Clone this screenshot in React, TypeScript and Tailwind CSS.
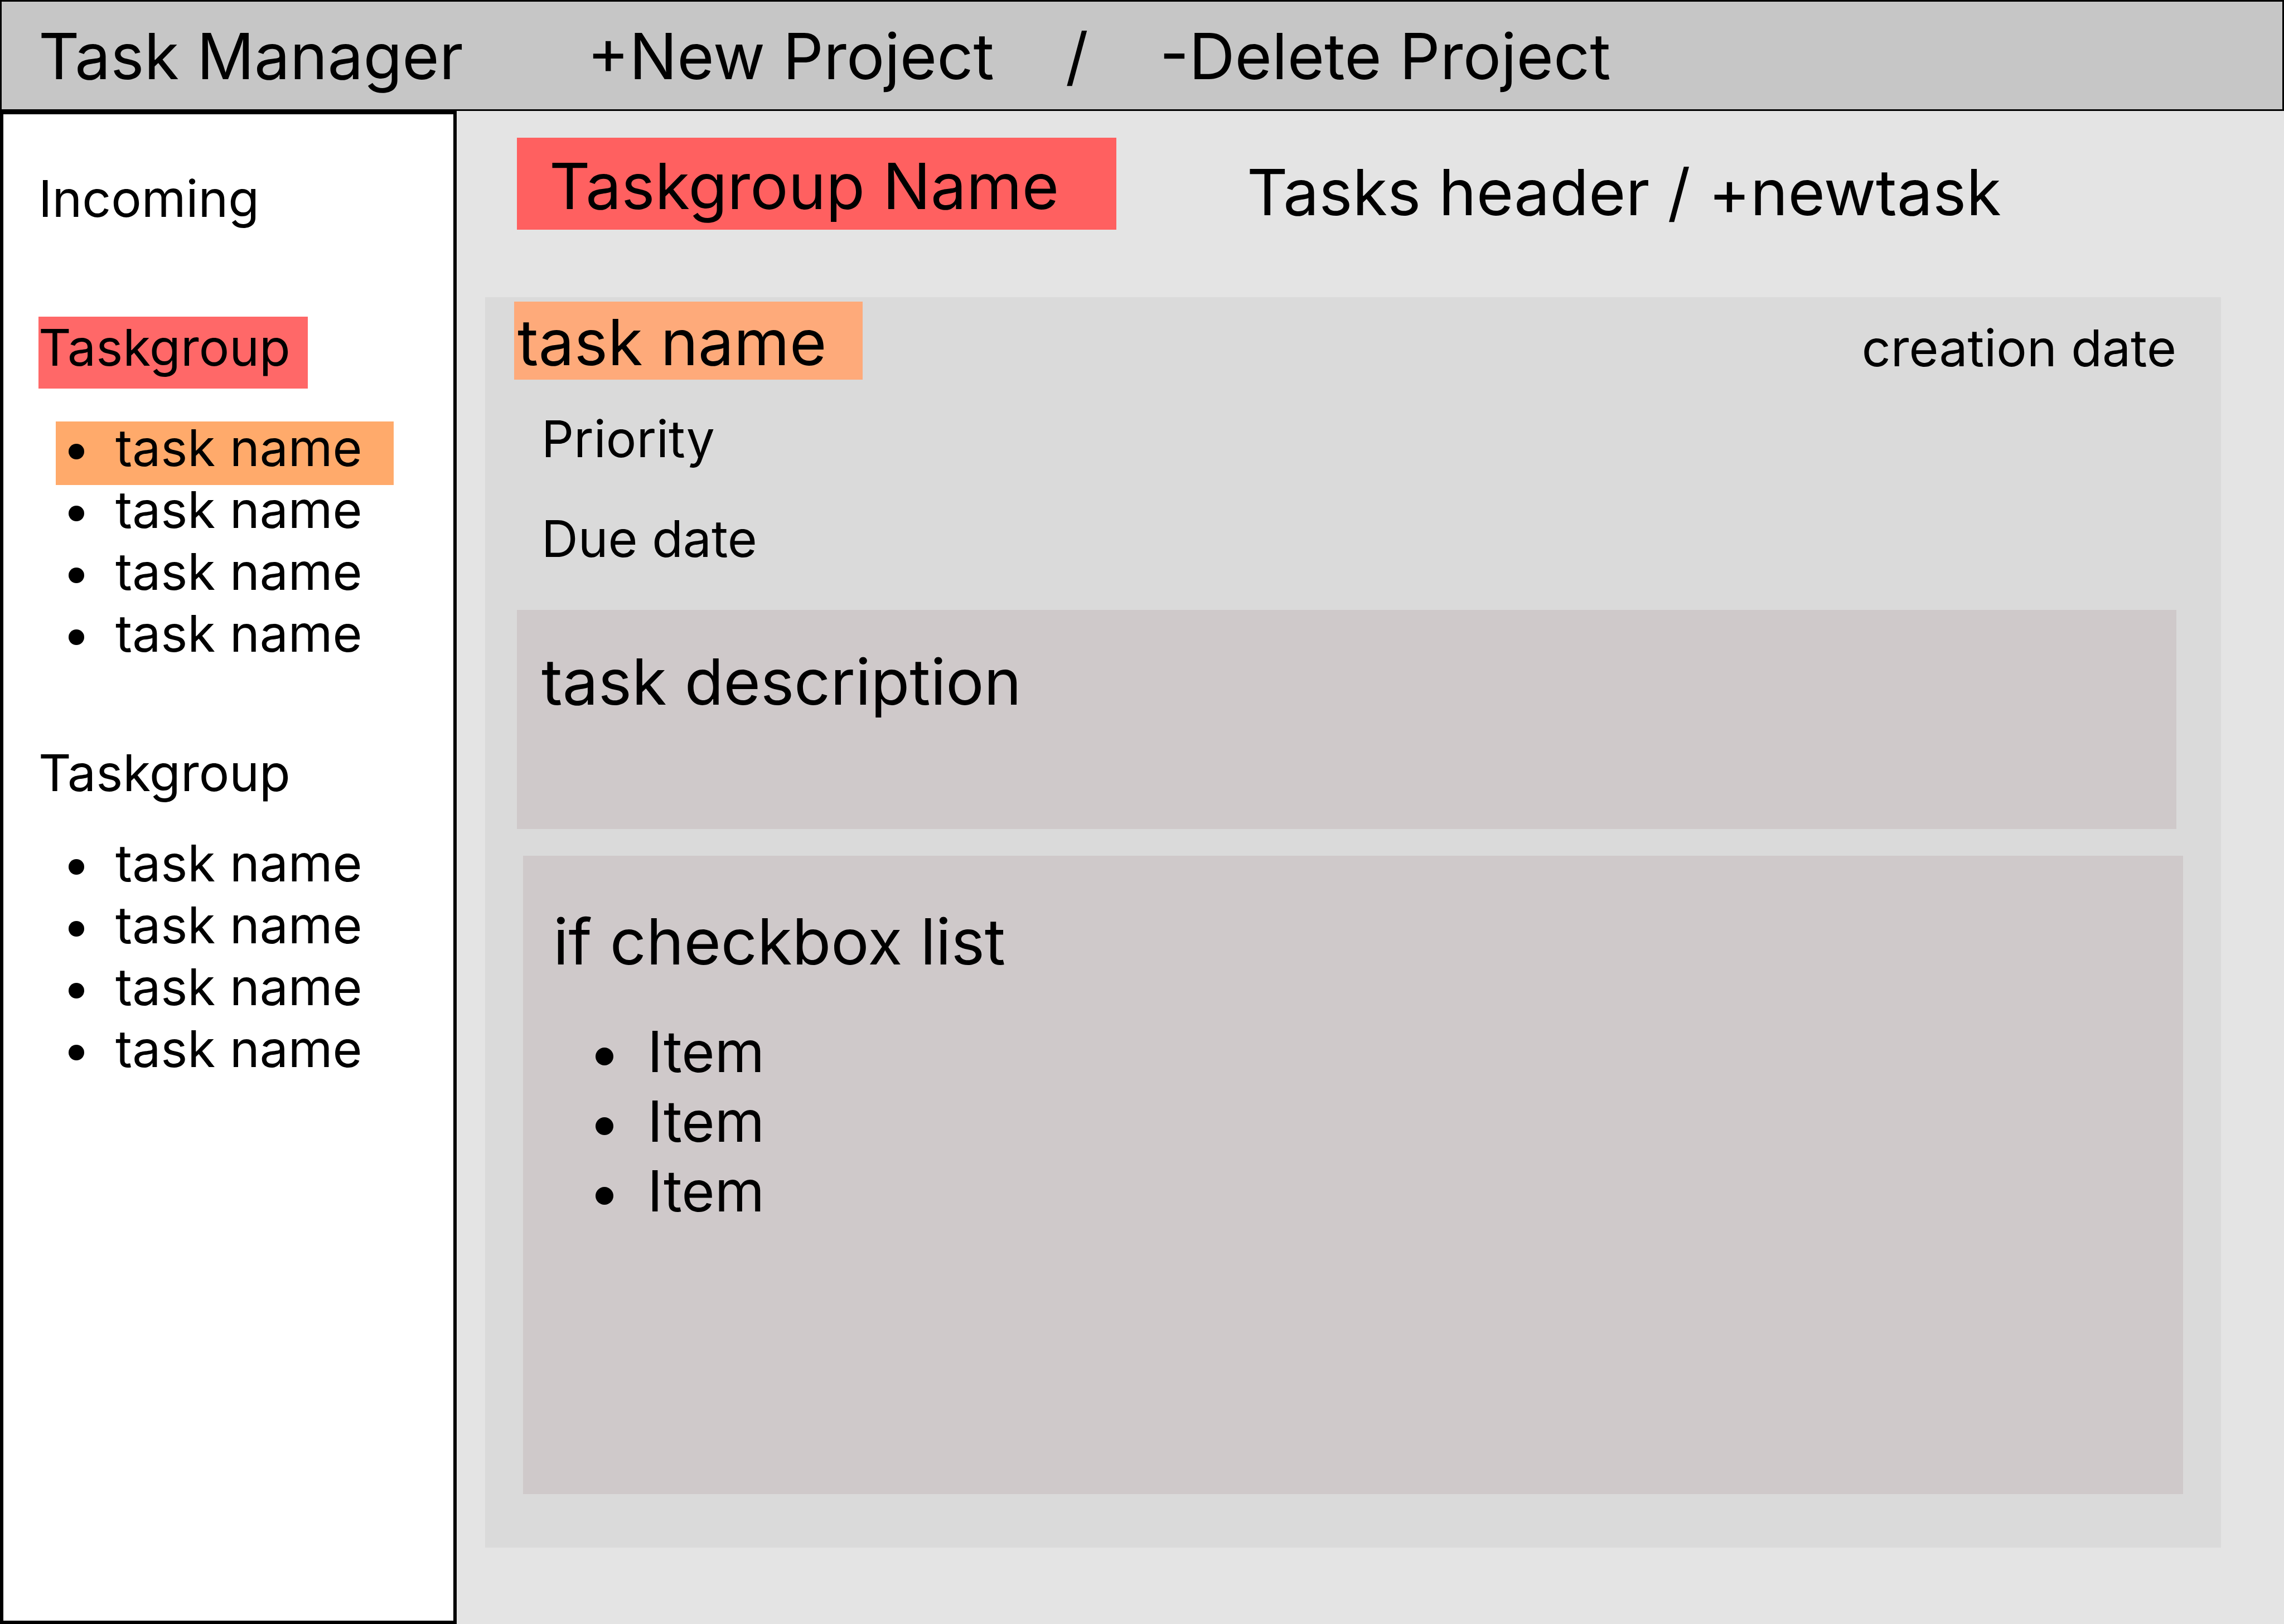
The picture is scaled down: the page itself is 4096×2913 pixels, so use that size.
const groupTasks = ["task name", "task name", "task name", "task name"];
const checklist = ["Item", "Item", "Item"];

function TaskList({ label, active }: { label: string; active?: number }) {
  return (
    <ul aria-label={label} className="ml-[31px]">
      {groupTasks.map((name, i) => (
        <li
          key={i}
          className={
            i === active
              ? "-mb-[3px] flex w-[606px] items-center bg-[#ffaa6b] pb-[19px] pl-[23px] leading-[95px]"
              : "-mb-[3px] flex w-[606px] items-center pb-[19px] pl-[23px] leading-[95px]"
          }
        >
          <span className="mt-3 mr-14 size-7 shrink-0 rounded-full bg-black" />
          <a href="#task">{name}</a>
        </li>
      ))}
    </ul>
  );
}

export default function App() {
  return (
    <div className="flex min-h-screen flex-col bg-[#e4e4e4] font-['Inter',sans-serif] text-[114px] leading-[138px] text-black">
      <header className="flex items-center border-[3px] border-black bg-[#c6c6c6] pt-[29px] pb-[26px] pl-[66px]">
        <h1 className="w-[984px]">Task Manager</h1>
        <button type="button">+New Project</button>
        <span className="mx-32">/</span>
        <button type="button">-Delete Project</button>
      </header>

      <div className="flex flex-1">
        <aside className="w-[819px] shrink-0 border-[6px] border-black bg-white pt-[96px] pl-[63px] text-[91px] leading-[111px]">
          <a href="#incoming" className="block">
            Incoming
          </a>
          <h2 className="mt-[156px] w-[483px] bg-[#ff6868] pb-[18px]">Taskgroup</h2>
          <div className="mt-[59px]">
            <TaskList label="Taskgroup tasks" active={0} />
          </div>
          <h2 className="mt-[131px]">Taskgroup</h2>
          <div className="mt-[59px]">
            <TaskList label="More taskgroup tasks" />
          </div>
        </aside>

        <main className="flex flex-1 flex-col pt-12 pr-[113px] pb-[137px] pl-[51px]">
          <div className="flex items-start">
            <h2 className="ml-[57px] w-[1075px] bg-[#ff6060] pt-[18px] pb-[9px] pl-[58px]">
              Taskgroup Name
            </h2>
            <p className="mt-[29px] ml-[234px]">
              Tasks header / <button type="button">+newtask</button>
            </p>
          </div>

          <section className="mt-[119px] flex flex-1 flex-col bg-[#dadada] pt-2 pb-24">
            <div className="flex items-start justify-between pr-20 pl-[52px]">
              <h3 className="h-[140px] w-[625px] bg-[#feaa7a] pt-1 pl-[6px]">task name</h3>
              <p className="mt-7 text-[91px] leading-[111px]">creation date</p>
            </div>
            <div className="mt-[51px] flex flex-col gap-[68px] pl-[101px] text-[91px] leading-[111px]">
              <p>Priority</p>
              <p>Due date</p>
            </div>
            <div className="mt-[72px] mr-20 ml-[57px] min-h-[393px] bg-[#cfc9ca] pt-[60px] pl-11">
              task description
            </div>
            <div className="mt-12 mr-[68px] ml-[68px] flex-1 bg-[#cfc9ca] pt-[85px] pl-[54px]">
              <h4>if checkbox list</h4>
              <ul className="mt-[66px] pl-[76px] text-[102px] leading-[125px]">
                {checklist.map((item, i) => (
                  <li key={i} className="flex items-center">
                    <span className="mt-4 mr-[61px] size-8 shrink-0 rounded-full bg-black" />
                    {item}
                  </li>
                ))}
              </ul>
            </div>
          </section>
        </main>
      </div>
    </div>
  );
}
